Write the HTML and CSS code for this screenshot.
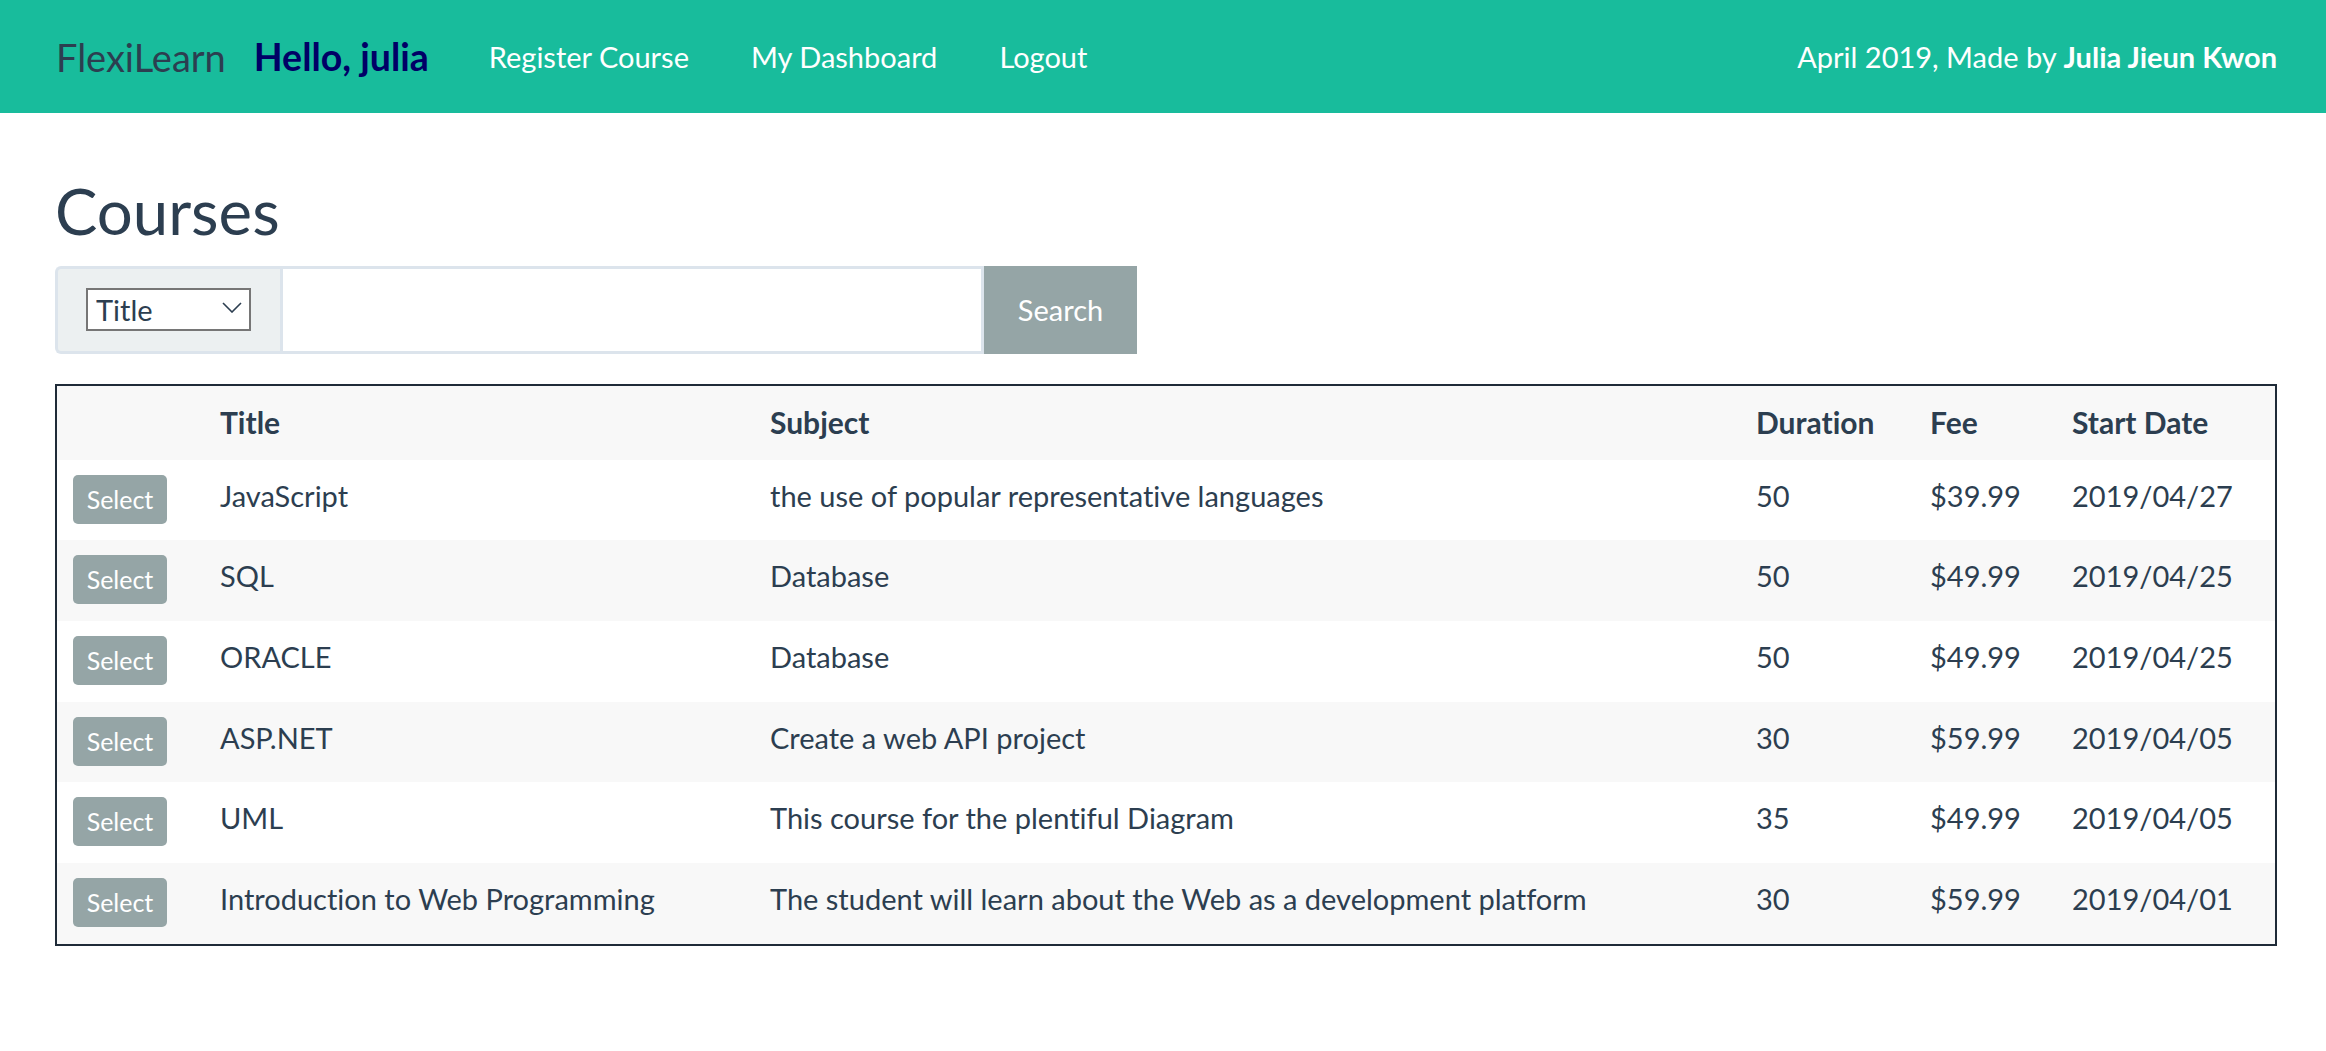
FILE: index.html
```html
<!DOCTYPE html>
<html lang="en">
<head>
<meta charset="utf-8">
<title>FlexiLearn - Courses</title>
<link rel="stylesheet" href="styles.css">
</head>
<body>
<nav class="navbar">
  <a class="brand" href="#">FlexiLearn</a>
  <span class="hello">Hello, julia</span>
  <ul class="nav-links">
    <li><a href="#">Register Course</a></li>
    <li><a href="#">My Dashboard</a></li>
    <li><a href="#">Logout</a></li>
  </ul>
  <span class="navbar-text">April 2019, Made by <strong>Julia Jieun Kwon</strong></span>
</nav>

<main class="content">
  <h1 class="page-title">Courses</h1>

  <form class="search-group">
    <div class="addon">
      <div class="select-wrap">
        <select class="field-select">
          <option>Title</option>
          <option>Subject</option>
        </select>
        <svg class="chevron" width="20" height="11" viewBox="0 0 20 11"><path d="M1 1 L10 10 L19 1" fill="none" stroke="#2c3e50" stroke-width="1.6"/></svg>
      </div>
    </div>
    <input class="search-input" type="text">
    <button class="search-btn" type="button">Search</button>
  </form>

  <table class="courses">
    <colgroup>
      <col class="c-sel"><col class="c-title"><col class="c-subj"><col class="c-dur"><col class="c-fee"><col class="c-date">
    </colgroup>
    <thead>
      <tr><th></th><th>Title</th><th>Subject</th><th>Duration</th><th>Fee</th><th>Start Date</th></tr>
    </thead>
    <tbody>
      <tr><td><button class="sel-btn">Select</button></td><td>JavaScript</td><td>the use of popular representative languages</td><td>50</td><td>$39.99</td><td>2019/04/27</td></tr>
      <tr><td><button class="sel-btn">Select</button></td><td>SQL</td><td>Database</td><td>50</td><td>$49.99</td><td>2019/04/25</td></tr>
      <tr><td><button class="sel-btn">Select</button></td><td>ORACLE</td><td>Database</td><td>50</td><td>$49.99</td><td>2019/04/25</td></tr>
      <tr><td><button class="sel-btn">Select</button></td><td>ASP.NET</td><td>Create a web API project</td><td>30</td><td>$59.99</td><td>2019/04/05</td></tr>
      <tr><td><button class="sel-btn">Select</button></td><td>UML</td><td>This course for the plentiful Diagram</td><td>35</td><td>$49.99</td><td>2019/04/05</td></tr>
      <tr><td><button class="sel-btn">Select</button></td><td>Introduction to Web Programming</td><td>The student will learn about the Web as a development platform</td><td>30</td><td>$59.99</td><td>2019/04/01</td></tr>
    </tbody>
  </table>
</main>
</body>
</html>
```

FILE: styles.css
```css
* { box-sizing: border-box; }

html, body {
  margin: 0;
  padding: 0;
  background: #ffffff;
  font-family: Lato, "Open Sans", "Liberation Sans", sans-serif;
  font-variant-ligatures: none;
  color: #2c3e50;
  font-size: 28px;
}

/* ---------- navbar ---------- */
.navbar {
  display: flex;
  align-items: center;
  height: 113px;
  padding: 0 49px 0 56px;
  background: #18bc9c;
}

.brand {
  font-size: 38px;
  color: #2c3e50;
  text-decoration: none;
  margin-right: 28px;
}

.hello {
  font-size: 37.5px;
  font-weight: 700;
  color: #000066;
  margin-right: 29px;
}

.nav-links {
  display: flex;
  list-style: none;
  margin: 0;
  padding: 0;
}

.nav-links a {
  display: block;
  padding: 0 31px;
  font-size: 29px;
  color: #ffffff;
  text-decoration: none;
}

.navbar-text {
  margin-left: auto;
  font-size: 29px;
  color: #ffffff;
}

.navbar-text strong { font-weight: 700; }

/* ---------- content ---------- */
.content {
  padding: 0 49px 0 55px;
}

.page-title {
  margin: 60px 0 16px;
  font-size: 63.5px;
  font-weight: 400;
  line-height: 76.8px;
  color: #2c3e50;
}

/* ---------- search group ---------- */
.search-group {
  display: flex;
  height: 88px;
  width: 1082px;
  margin: 0 0 30px;
}

.addon {
  display: flex;
  align-items: center;
  width: 225px;
  padding-left: 28px;
  background: #ecf0f1;
  border: 3px solid #dce4ec;
  border-right: none;
  border-radius: 6px 0 0 6px;
}

.select-wrap {
  position: relative;
  width: 165px;
  height: 43px;
}

.field-select {
  appearance: none;
  -webkit-appearance: none;
  width: 100%;
  height: 100%;
  margin: 0;
  padding: 0 0 0 8px;
  border: 2px solid #767676;
  border-radius: 0;
  background: #ffffff;
  font-family: Lato, "Liberation Sans", sans-serif;
  font-size: 29px;
  color: #2c3e50;
}

.chevron {
  position: absolute;
  right: 9px;
  top: 14px;
  pointer-events: none;
}

.search-input {
  width: 704px;
  height: 88px;
  margin: 0;
  border: 3px solid #dce4ec;
  background: #ffffff;
  font-family: inherit;
  font-size: 28px;
}

.search-btn {
  width: 153px;
  height: 88px;
  margin: 0;
  border: none;
  background: #95a5a6;
  color: #ffffff;
  font-family: Lato, "Liberation Sans", sans-serif;
  font-size: 29px;
}

/* ---------- table ---------- */
.courses {
  width: 2222px;
  table-layout: fixed;
  border-collapse: separate;
  border-spacing: 0;
  border: 2px solid #1f2b38;
}

.c-sel { width: 147px; }
.c-title { width: 550px; }
.c-subj { width: 986px; }
.c-dur { width: 174px; }
.c-fee { width: 142px; }
.c-date { width: 219px; }

.courses th,
.courses td {
  text-align: left;
  vertical-align: top;
  line-height: 42px;
  white-space: nowrap;
}

.courses th {
  height: 74px;
  padding: 15px 16px 17px;
  font-size: 30px;
  font-weight: 700;
  background: #f8f8f8;
}

.courses td {
  height: 80.67px;
  padding: 15px 16px 16.67px;
  font-size: 29px;
}

.courses tbody tr:nth-child(even) td {
  background: #f8f8f8;
}

.sel-btn {
  display: block;
  width: 94px;
  height: 49px;
  padding: 0;
  border: none;
  border-radius: 5px;
  background: #95a5a6;
  color: #ffffff;
  font-family: Lato, "Liberation Sans", sans-serif;
  font-size: 25px;
  line-height: 49px;
}
```
